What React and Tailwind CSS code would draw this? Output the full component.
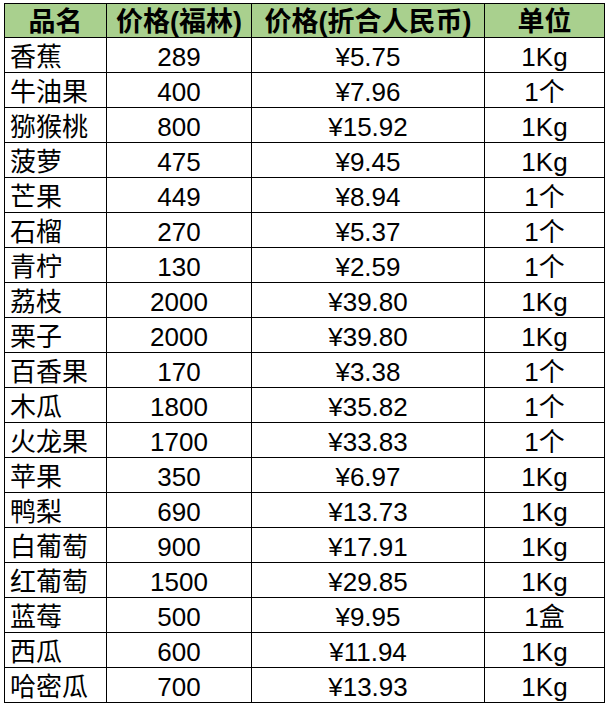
import React from "react";

const rows = [
  ["香蕉", "289", "¥5.75", "1Kg"],
  ["牛油果", "400", "¥7.96", "1个"],
  ["猕猴桃", "800", "¥15.92", "1Kg"],
  ["菠萝", "475", "¥9.45", "1Kg"],
  ["芒果", "449", "¥8.94", "1个"],
  ["石榴", "270", "¥5.37", "1个"],
  ["青柠", "130", "¥2.59", "1个"],
  ["荔枝", "2000", "¥39.80", "1Kg"],
  ["栗子", "2000", "¥39.80", "1Kg"],
  ["百香果", "170", "¥3.38", "1个"],
  ["木瓜", "1800", "¥35.82", "1个"],
  ["火龙果", "1700", "¥33.83", "1个"],
  ["苹果", "350", "¥6.97", "1Kg"],
  ["鸭梨", "690", "¥13.73", "1Kg"],
  ["白葡萄", "900", "¥17.91", "1Kg"],
  ["红葡萄", "1500", "¥29.85", "1Kg"],
  ["蓝莓", "500", "¥9.95", "1盒"],
  ["西瓜", "600", "¥11.94", "1Kg"],
  ["哈密瓜", "700", "¥13.93", "1Kg"],
];

const headers = ["品名", "价格(福林)", "价格(折合人民币)", "单位"];

export default function App() {
  return (
    <div
      className="w-[607px] h-[707px] bg-white pt-[3px] pl-[4px] text-black"
      style={{ fontFamily: '"Liberation Sans", "Noto Sans CJK SC", sans-serif' }}
    >
      <div className="w-[601px] grid grid-cols-[102px_145px_233px_120px] border-l border-t border-black text-[26px] leading-none">
        {/* Header */}
        {headers.map((h) => (
          <div
            key={h}
            className="h-[34px] flex items-center justify-center pt-[3px] bg-[#a9d08e] border-r border-b border-black font-bold text-[27px]"
          >
            {h}
          </div>
        ))}
        {rows.map((r, i) =>
          r.map((c, j) => (
            <div
              key={i + "-" + j}
              className={
                "h-[35px] flex items-center pt-[4px] border-r border-b border-black " +
                (j === 0 ? "justify-start pl-[5px]" : "justify-center")
              }
            >
              {c}
            </div>
          ))
        )}
      </div>
    </div>
  );
}
